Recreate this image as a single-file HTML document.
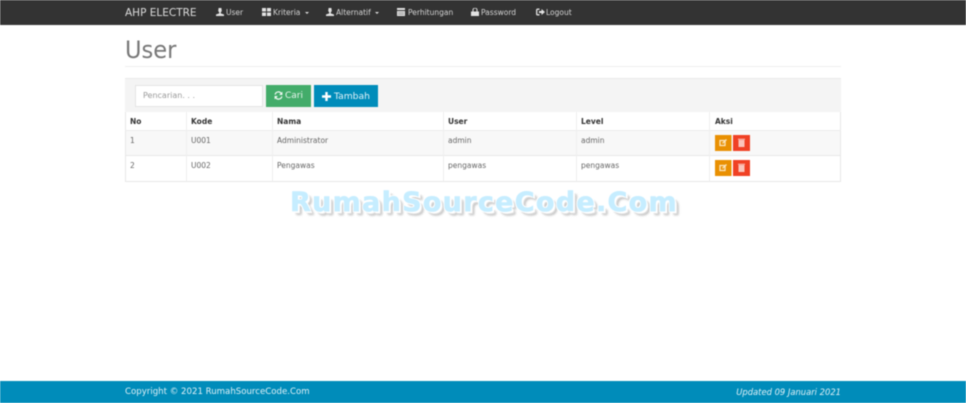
<!DOCTYPE html>
<html lang="id">
<head>
<meta charset="utf-8">
<title>User</title>
<style>
html,body{margin:0;padding:0;background:#fff}
body{width:966px;height:403px;overflow:hidden;position:relative;font-family:"DejaVu Sans","Liberation Sans",sans-serif;color:#555}
#w{position:absolute;left:0;top:0;width:966px;height:403px;filter:blur(.45px)}
.a{position:absolute;white-space:nowrap}
.nav{left:0;top:0;width:966px;height:25px;background:#333}
.n{top:7px;font-size:7.5px;line-height:12px;color:#d4d4d4}
.ic{position:absolute;top:8px}
.caret{display:inline-block;width:0;height:0;border-left:2.5px solid transparent;border-right:2.5px solid transparent;border-top:2.5px solid #ddd;vertical-align:1px;margin-left:2px}
.th{top:116px;font-size:7.5px;line-height:11px;font-weight:bold;color:#333}
.td{font-size:7.5px;line-height:11px;color:#666}
.vl{top:112px;width:1px;height:69px;background:#efefef}
</style>
</head>
<body>
<div id="w">
<div class="a nav"></div>
<div class="a" style="left:125px;top:6px;font:10.5px/14px 'DejaVu Sans',sans-serif;color:#ddd;letter-spacing:0">AHP ELECTRE</div>

<svg class="ic" style="left:216px" width="8" height="8" viewBox="0 0 8 8"><path d="M2.600 0h2.800l.4 3-1 1.400v1L8 6.500V8H0V6.500l3.200-1.100v-1L2.200 3z" fill="#e2e2e2"/></svg>
<div class="a n" style="left:226px">User</div>
<svg class="ic" style="left:262px" width="9" height="8" viewBox="0 0 9 8"><path d="M0 0h4v3.500H0zM5 0h4v3.500H5zM0 4.500h4V8H0zM5 4.500h4V8H5z" fill="#e2e2e2"/></svg>
<div class="a n" style="left:273px">Kriteria <span class="caret"></span></div>
<svg class="ic" style="left:326px" width="8" height="8" viewBox="0 0 8 8"><path d="M2.600 0h2.800l.4 3-1 1.400v1L8 6.500V8H0V6.500l3.200-1.100v-1L2.200 3z" fill="#e2e2e2"/></svg>
<div class="a n" style="left:336px">Alternatif <span class="caret"></span></div>
<svg class="ic" style="left:397px" width="8" height="8" viewBox="0 0 8 8"><path d="M0 0h8v2H0zM0 3h8v5H0z" fill="#e2e2e2"/><path d="M1 4.500h6M1 6.200h6" stroke="#777" stroke-width=".6"/></svg>
<div class="a n" style="left:408px">Perhitungan</div>
<svg class="ic" style="left:471px" width="8" height="8" viewBox="0 0 8 8"><path d="M2 3.500V2a2 2 0 0 1 4 0v1.500" fill="none" stroke="#e2e2e2"/><path d="M0 3.500h8V8H0z" fill="#e2e2e2"/></svg>
<div class="a n" style="left:481px">Password</div>
<svg class="ic" style="left:536px" width="9" height="8" viewBox="0 0 9 8"><path d="M3.500 1.200H1.500a.8.800 0 0 0-.8.800v4a.8.800 0 0 0 .8.800h2" fill="none" stroke="#e2e2e2" stroke-width="1.300"/><path d="M3 3h2.500V1L9 4 5.500 7V5H3z" fill="#e2e2e2"/></svg>
<div class="a n" style="left:546px">Logout</div>

<div class="a" style="left:125px;top:36px;font:24px/28px 'DejaVu Sans',sans-serif;color:#777;transform:scaleX(.94);transform-origin:left">User</div>
<div class="a" style="left:125px;top:66px;width:716px;height:1px;background:#eee"></div>

<div class="a" style="left:125px;top:78px;width:716px;height:34px;background:#f4f4f4;border-top:1px solid #eaeaea;box-sizing:border-box"></div>
<div class="a" style="left:135px;top:85px;width:128px;height:22px;box-sizing:border-box;background:#fff;border:1px solid #e4e4e4;font-size:8px;line-height:20px;color:#999;padding-left:7px">Pencarian. . .</div>
<div class="a" style="left:266px;top:85px;width:45px;height:22px;background:#43ac6a;color:#e8f5ee;font-size:9px;line-height:21px">
  <svg style="position:absolute;left:8px;top:6px" width="9" height="9" viewBox="0 0 8 8"><path d="M1 3.200A3 3 0 0 1 6.500 2.200M7 4.800A3 3 0 0 1 1.500 5.800" fill="none" stroke="#f0f8f3" stroke-width="1.100"/><path d="M7.500 .6v3h-3zM.5 7.400v-3h3z" fill="#f0f8f3"/></svg>
  <span style="position:absolute;left:19px;top:1px">Cari</span>
</div>
<div class="a" style="left:314px;top:85px;width:64px;height:22px;background:#008cba;color:#e3f3f9;font-size:9.200px;line-height:21px">
  <svg style="position:absolute;left:8px;top:6.500px" width="9" height="9" viewBox="0 0 9 9"><path d="M3.300 0h2.400v3.300H9v2.400H5.700V9H3.300V5.700H0V3.300h3.300z" fill="#fff"/></svg>
  <span style="position:absolute;left:20px;top:1px">Tambah</span>
</div>

<div class="a" style="left:125px;top:112px;width:716px;height:70px;box-sizing:border-box;border:1px solid #e8e8e8;border-top:0"></div>
<div class="a" style="left:126px;top:131px;width:714px;height:24px;background:#f8f8f8"></div>
<div class="a" style="left:125px;top:130px;width:716px;height:1px;background:#ececec"></div>
<div class="a" style="left:125px;top:155px;width:716px;height:1px;background:#e8e8e8"></div>
<div class="a vl" style="left:186px"></div>
<div class="a vl" style="left:272px"></div>
<div class="a vl" style="left:443px"></div>
<div class="a vl" style="left:576px"></div>
<div class="a vl" style="left:709px"></div>

<div class="a th" style="left:130px">No</div>
<div class="a th" style="left:191px">Kode</div>
<div class="a th" style="left:277px">Nama</div>
<div class="a th" style="left:448px">User</div>
<div class="a th" style="left:581px">Level</div>
<div class="a th" style="left:715px">Aksi</div>

<div class="a td" style="left:130px;top:135px">1</div>
<div class="a td" style="left:191px;top:135px">U001</div>
<div class="a td" style="left:277px;top:135px">Administrator</div>
<div class="a td" style="left:448px;top:135px">admin</div>
<div class="a td" style="left:581px;top:135px">admin</div>

<div class="a td" style="left:130px;top:160px">2</div>
<div class="a td" style="left:191px;top:160px">U002</div>
<div class="a td" style="left:277px;top:160px">Pengawas</div>
<div class="a td" style="left:448px;top:160px">pengawas</div>
<div class="a td" style="left:581px;top:160px">pengawas</div>

<svg class="a" style="left:715px;top:135px" width="36" height="41" viewBox="0 0 36 41">
  <g>
    <rect width="16.500" height="16" fill="#e99002"/>
    <rect x="18" width="17" height="16" fill="#f04124"/>
    <path d="M5 5.500h5v5H5z" fill="none" stroke="#fbe6c0" stroke-width="1.300"/>
    <path d="M7.500 8.300l4-3.800" stroke="#fbe6c0" stroke-width="1.300"/>
    <path d="M23.500 5h6v7h-6zM23 3.800h7v1h-7z" fill="#fbc5bb"/>
  </g>
  <g transform="translate(0 25)">
    <rect width="16.500" height="16" fill="#e99002"/>
    <rect x="18" width="17" height="16" fill="#f04124"/>
    <path d="M5 5.500h5v5H5z" fill="none" stroke="#fbe6c0" stroke-width="1.300"/>
    <path d="M7.500 8.300l4-3.800" stroke="#fbe6c0" stroke-width="1.300"/>
    <path d="M23.500 5h6v7h-6zM23 3.800h7v1h-7z" fill="#fbc5bb"/>
  </g>
</svg>

<div class="a" style="left:290px;top:185px;font:bold 27px/36px 'DejaVu Sans',sans-serif;letter-spacing:1.300px;color:#c6edff;-webkit-text-stroke:.6px #c6edff;text-shadow:-1px -1px 0 #fff,1px -1px 0 #fff,-1px 1px 0 #fff,2px 2px 0 #fff,3px 3px 1px #ddd,4px 4px 2px #bbb">RumahSourceCode.Com</div>

<div class="a" style="left:0;top:381px;width:966px;height:22px;background:#008cba"></div>
<div class="a" style="left:125px;top:386px;font-size:8.600px;line-height:12px;color:#e0f1f7">Copyright © 2021 RumahSourceCode.Com</div>
<div class="a" style="right:125px;top:386px;font-size:8.400px;line-height:12px;font-style:italic;color:#e0f1f7">Updated 09 Januari 2021</div>
</div>
</body>
</html>
